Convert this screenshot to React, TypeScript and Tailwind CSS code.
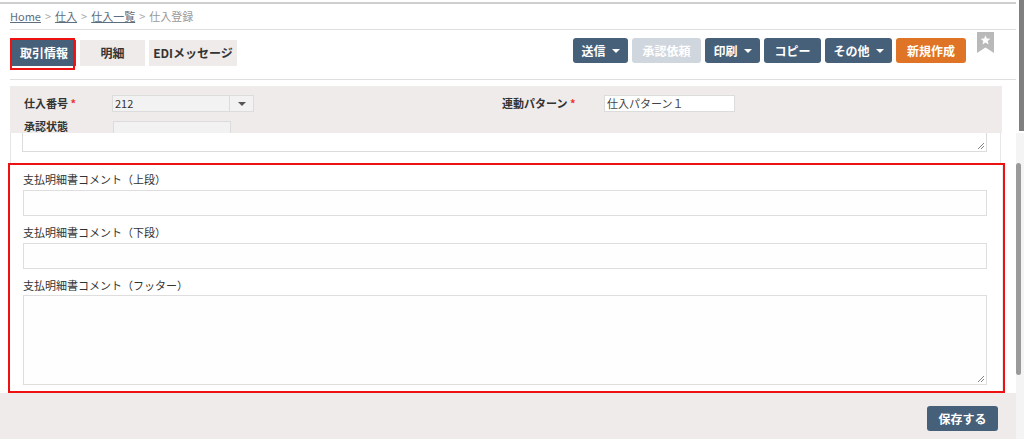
import React from "react";

const Caret = () => (
  <span className="ml-[6px] inline-block w-0 h-0 border-l-[4px] border-r-[4px] border-t-[4px] border-l-transparent border-r-transparent border-t-white" />
);

const Btn = ({ w, children, color = "bg-[#46607a]", text = "text-white" }: { w: string; children: React.ReactNode; color?: string; text?: string }) => (
  <div className={`${w} h-[25px] ${color} ${text} rounded-[3px] flex items-center justify-center text-[12px] font-bold`}>{children}</div>
);

const Star = () => (
  <svg width="17" height="21" viewBox="0 0 17 21">
    <path d="M0 0 H17 V21 L8.5 15.5 L0 21 Z" fill="#b9b9b9" />
    <path d="M8.5 3.2 L9.9 6.6 L13.4 6.8 L10.7 9 L11.6 12.4 L8.5 10.5 L5.4 12.4 L6.3 9 L3.6 6.8 L7.1 6.6 Z" fill="#ffffff" />
  </svg>
);

const Resize = () => (
  <svg width="6" height="6" viewBox="0 0 6 6" className="absolute right-[2px] bottom-[2px]">
    <path d="M6 0 L0 6 M6 3 L3 6" stroke="#777" strokeWidth="0.9" />
  </svg>
);

export default function App() {
  return (
    <div
      className="w-[1024px] h-[439px] overflow-hidden flex bg-white text-[#333]"
      style={{ fontFamily: '"Noto Sans CJK JP", "Noto Sans", "Liberation Sans", sans-serif' }}
    >
      <div className="w-[1016px] flex flex-col">
        {/* Upper section */}
        <div className="h-[133px] flex flex-col overflow-hidden shrink-0">
          <div className="h-[2px] shrink-0" />
          <div className="h-[2px] bg-[#cfcfcf] w-[1018px] shrink-0" />
          <div className="h-[25px] shrink-0 flex items-center pl-[10px] text-[11px] gap-[4px]">
            <span className="text-[#5d6e80] underline">Home</span>
            <span className="text-[#aaa]">&gt;</span>
            <span className="text-[#5d6e80] underline">仕入</span>
            <span className="text-[#aaa]">&gt;</span>
            <span className="text-[#5d6e80] underline">仕入一覧</span>
            <span className="text-[#aaa]">&gt;</span>
            <span className="text-[#999]">仕入登録</span>
          </div>
          <div className="h-px shrink-0 bg-[#dedede] ml-[10px]" />
          <div className="h-[49px] shrink-0 flex items-start pl-[12px]">
            <div className="flex gap-[4px] mt-[10px]">
              <div className="relative w-[64px] h-[26px] bg-[#46607a] text-white text-[12px] font-bold flex items-center justify-center">
                取引情報
                <div className="absolute left-[-2px] top-[-2px] w-[65px] h-[32px] border-[2.5px] border-[#ee1111]" />
              </div>
              <div className="w-[65px] h-[26px] bg-[#eeebea] text-[12px] font-bold flex items-center justify-center">明細</div>
              <div className="w-[88px] h-[26px] bg-[#eeebea] text-[12px] font-bold flex items-center justify-center">EDIメッセージ</div>
            </div>
            <div className="ml-auto flex gap-[4px] mt-[8px]">
              <Btn w="w-[55px]">送信<Caret /></Btn>
              <Btn w="w-[69px]" color="bg-[#cfd6de]">承認依頼</Btn>
              <Btn w="w-[55px]">印刷<Caret /></Btn>
              <Btn w="w-[57px]">コピー</Btn>
              <Btn w="w-[67px]">その他<Caret /></Btn>
              <Btn w="w-[70px]" color="bg-[#df7426]">新規作成</Btn>
            </div>
            <div className="ml-[11px] mr-[22px] mt-[2px]">
              <Star />
            </div>
          </div>
          <div className="h-px shrink-0 bg-[#dedede] ml-[10px]" />
          <div className="h-[6px] shrink-0" />
          <div className="ml-[10px] w-[992px] h-[60px] shrink-0 bg-[#eeebea] pt-[9px] pl-[14px] flex flex-col gap-[9px]">
            <div className="flex items-center h-[17px] shrink-0">
              <div className="w-[88px] text-[11px] font-bold">
                仕入番号 <span className="text-[#e33]">*</span>
              </div>
              <div className="w-[142px] h-[17px] bg-[#f2f2f2] border border-[#dcdcdc] flex items-center text-[11px] text-[#333]">
                <span className="pl-[2px] flex-1">212</span>
                <div className="w-[24px] h-full border-l border-[#dcdcdc] flex items-center justify-center">
                  <span className="inline-block w-0 h-0 border-l-[4px] border-r-[4px] border-t-[4px] border-l-transparent border-r-transparent border-t-[#555]" />
                </div>
              </div>
              <div className="w-[248px]" />
              <div className="w-[102px] text-[11px] font-bold">
                連動パターン <span className="text-[#e33]">*</span>
              </div>
              <div className="w-[131px] h-[17px] bg-white border border-[#dcdcdc] flex items-center text-[11px] text-[#444] pl-[2px]">
                仕入パターン１
              </div>
            </div>
            <div className="flex items-start shrink-0">
              <div className="w-[89px] text-[11px] font-bold leading-[12px] mt-[-1px]">承認状態</div>
              <div className="w-[118px] h-[20px] bg-[#f2f2f2] border border-[#dcdcdc]" />
            </div>
          </div>
        </div>

        {/* Lower section */}
        <div className="flex-1 flex flex-col">
          <div className="ml-[10px] w-[991px] h-[30px] bg-white border-x border-[#e6e6e6] shrink-0">
            <div className="relative ml-[11px] w-[965px] h-[19px] border-x border-b border-[#dcdcdc] bg-white">
              <Resize />
            </div>
          </div>
          <div className="ml-[8px] w-[997px] h-[230px] border-[2.5px] border-[#ee1111] bg-white shrink-0">
            <div className="ml-[1px] w-[992px] h-full border-r border-[#ececec] pl-[12px] flex flex-col text-[11px] text-[#333]">
              <div className="mt-[7px] h-[14px] leading-[14px]">支払明細書コメント（上段）</div>
              <div className="mt-[4px] w-[964px] h-[26px] border border-[#dedede] bg-[#fefefe] shrink-0" />
              <div className="mt-[9px] h-[14px] leading-[14px]">支払明細書コメント（下段）</div>
              <div className="mt-[4px] w-[964px] h-[26px] border border-[#dedede] bg-[#fefefe] shrink-0" />
              <div className="mt-[9px] h-[14px] leading-[14px]">支払明細書コメント（フッター）</div>
              <div className="relative mt-[3px] w-[964px] h-[90px] border border-[#dedede] bg-[#fefefe] shrink-0">
                <Resize />
              </div>
            </div>
          </div>
          <div className="flex-1 bg-[#eeebea] flex justify-end pt-[13px] pr-[18px]">
            <div className="w-[71px] h-[25px] bg-[#46607a] rounded-[3px] text-white text-[12px] font-bold flex items-center justify-center">
              保存する
            </div>
          </div>
        </div>
      </div>

      {/* Scrollbars */}
      <div className="w-[8px] flex flex-col">
        <div className="h-[133px] flex justify-end shrink-0">
          <div className="w-[5px] h-[131px] bg-[#7f7f7f]" />
        </div>
        <div className="flex-1 bg-[#f4f4f4] pt-[30px]">
          <div className="w-[5px] h-[212px] bg-[#9a9a9a] rounded-full" />
        </div>
      </div>
    </div>
  );
}
